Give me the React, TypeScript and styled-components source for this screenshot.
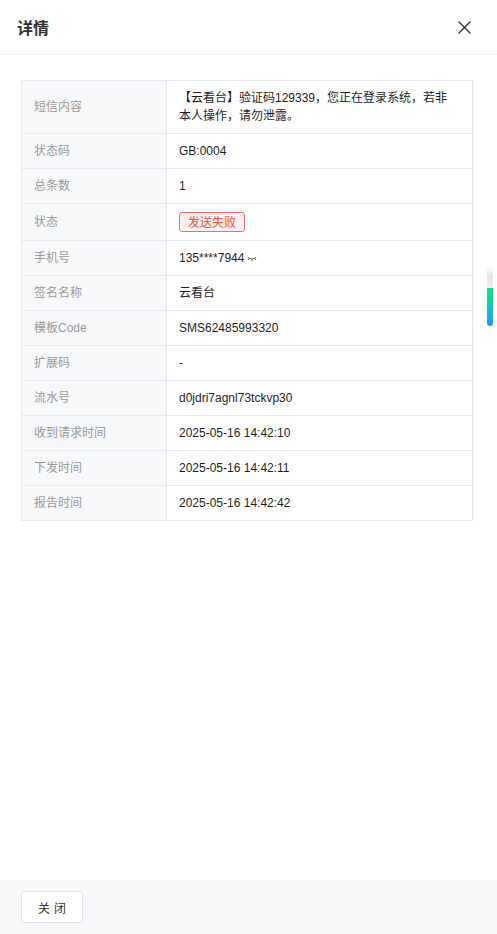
import React from 'react';
import styled, { createGlobalStyle } from 'styled-components';

const GlobalStyle = createGlobalStyle`
  html, body {
    margin: 0;
    padding: 0;
    background: #ffffff;
  }
  body {
    font-family: "Liberation Sans", "Noto Sans CJK SC", sans-serif;
    -webkit-font-smoothing: antialiased;
  }
  * {
    box-sizing: border-box;
  }
`;

const Drawer = styled.div`
  position: relative;
  display: flex;
  flex-direction: column;
  width: 497px;
  height: 934px;
  background: #ffffff;
  overflow: hidden;
`;

const Header = styled.header`
  display: flex;
  align-items: center;
  justify-content: space-between;
  height: 55px;
  padding: 0 25px 0 17px;
  border-bottom: 1px solid #f2f3f5;
`;

const Title = styled.h2`
  margin: 0;
  font-size: 16px;
  font-weight: 700;
  color: #303133;
  font-family: "Noto Sans CJK SC", sans-serif;
`;

const CloseButton = styled.button`
  display: flex;
  align-items: center;
  justify-content: center;
  width: 16px;
  height: 16px;
  padding: 0;
  border: none;
  background: transparent;
  color: #303133;
  cursor: pointer;
`;

const Body = styled.main`
  flex: 1;
  padding: 25px 24px 0 21px;
`;

const Table = styled.div`
  display: grid;
  grid-template-columns: 145px 1fr;
  border-top: 1px solid #e6e8ef;
  border-left: 1px solid #e6e8ef;
  font-size: 12px;
  line-height: 18px;
`;

const LabelCell = styled.div`
  display: flex;
  align-items: center;
  padding: 8px 12px;
  background: #f7f8fa;
  color: #999999;
  border-right: 1px solid #e6e8ef;
  border-bottom: 1px solid #e6e8ef;
  font-family: "Liberation Sans", "Noto Sans CJK SC", sans-serif;
`;

const ValueCell = styled.div`
  display: flex;
  align-items: center;
  padding: 8px 20px 8px 12px;
  color: #1f1f1f;
  border-right: 1px solid #e6e8ef;
  border-bottom: 1px solid #e6e8ef;
  font-family: "Liberation Sans", "Noto Sans CJK SC", sans-serif;
`;

const Tag = styled.span<{ tone: 'danger' | 'success' }>`
  display: inline-flex;
  align-items: center;
  height: 20px;
  padding: 0 8px;
  border-radius: 3px;
  border: 1px solid ${(p) => (p.tone === 'danger' ? '#f56c6c' : '#67c23a')};
  background: ${(p) => (p.tone === 'danger' ? '#fef0f0' : '#f0f9eb')};
  color: ${(p) => (p.tone === 'danger' ? '#f34d4d' : '#67c23a')};
  font-family: "Noto Sans CJK SC", sans-serif;
  font-size: 12px;
`;

const EyeIcon = styled.svg`
  margin-left: 3px;
  margin-top: 2px;
  color: #555555;
`;

const Footer = styled.footer`
  display: flex;
  align-items: center;
  height: 54px;
  padding: 0 21px;
  background: #f7f8fa;
`;

const Button = styled.button`
  height: 32px;
  width: 62px;
  border: 1px solid #dcdfe6;
  border-radius: 3px;
  background: #ffffff;
  color: #303133;
  font-size: 12px;
  letter-spacing: 4px;
  padding: 0 0 0 4px;
  font-family: "Noto Sans CJK SC", sans-serif;
  cursor: pointer;
`;

/* floating widget peeking in at the right edge */
const SideHandle = styled.div`
  position: absolute;
  right: 4px;
  top: 266px;
  width: 6px;
  height: 60px;
  border-radius: 3px;
  background: linear-gradient(
    to bottom,
    rgba(230, 230, 230, 0) 0%,
    rgba(225, 225, 225, 0.9) 18%,
    rgba(235, 235, 235, 0.8) 36%,
    #12e07f 37%,
    #10c8b0 65%,
    #1a9cf6 100%
  );
`;

type Row = { label: string; value: React.ReactNode };

const rows: Row[] = [
  { label: '短信内容', value: '【云看台】验证码129339，您正在登录系统，若非本人操作，请勿泄露。' },
  { label: '状态码', value: 'GB:0004' },
  { label: '总条数', value: '1' },
  { label: '状态', value: <Tag tone="danger">发送失败</Tag> },
  {
    label: '手机号',
    value: (
      <>
        135****7944
        <EyeIcon width="10" height="6" viewBox="0 0 10 6" fill="none">
          <path d="M0.8 1.2 Q5 5 9.2 1.2" stroke="currentColor" strokeWidth="1" />
          <path d="M2 2.6 L1.3 4 M5 3.8 V5.4 M8 2.6 L8.7 4" stroke="currentColor" strokeWidth="0.9" />
        </EyeIcon>
      </>
    ),
  },
  { label: '签名名称', value: '云看台' },
  { label: '模板Code', value: 'SMS62485993320' },
  { label: '扩展码', value: '-' },
  { label: '流水号', value: 'd0jdri7agnl73tckvp30' },
  { label: '收到请求时间', value: '2025-05-16 14:42:10' },
  { label: '下发时间', value: '2025-05-16 14:42:11' },
  { label: '报告时间', value: '2025-05-16 14:42:42' },
];

export default function App() {
  return (
    <>
      <GlobalStyle />
      <Drawer>
        <Header>
          <Title>详情</Title>
          <CloseButton aria-label="close">
            <svg width="13" height="13" viewBox="0 0 13 13" fill="none">
              <path d="M1 1 L12 12 M12 1 L1 12" stroke="currentColor" strokeWidth="1.4" strokeLinecap="round" />
            </svg>
          </CloseButton>
        </Header>
        <Body>
          <Table>
            {rows.map((r) => (
              <React.Fragment key={r.label}>
                <LabelCell>{r.label}</LabelCell>
                <ValueCell>{r.value}</ValueCell>
              </React.Fragment>
            ))}
          </Table>
        </Body>
        <Footer>
          <Button>关闭</Button>
        </Footer>
        <SideHandle />
      </Drawer>
    </>
  );
}
